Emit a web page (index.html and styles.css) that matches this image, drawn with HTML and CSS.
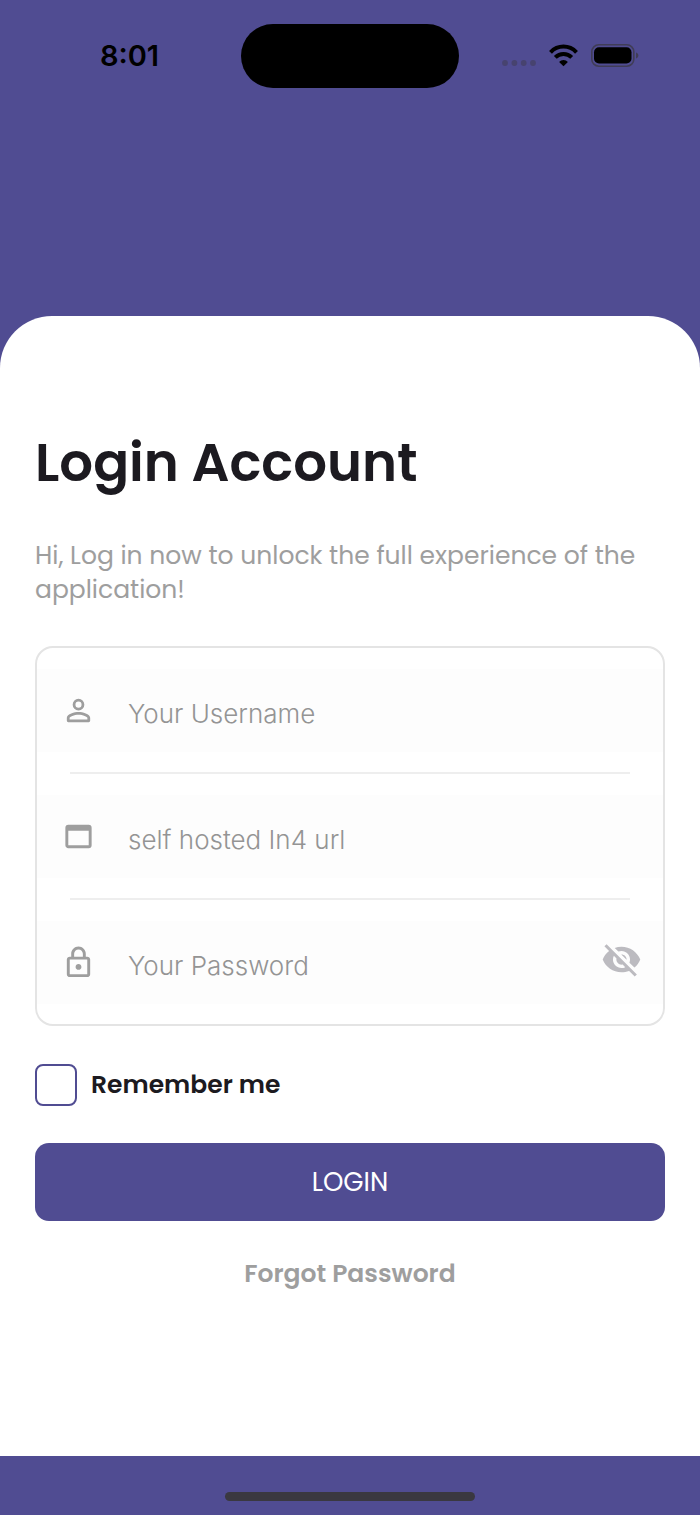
FILE: index.html
```html
<!DOCTYPE html>
<html lang="en">
<head>
<meta charset="utf-8">
<meta name="viewport" content="width=device-width, initial-scale=1">
<title>Login Account</title>
<link rel="stylesheet" href="styles.css">
</head>
<body>
<div class="screen">
  <header class="hero">
    <div class="status-bar">
      <time class="clock">8:01</time>
      <div class="island"></div>
      <div class="indicators">
        <svg class="signal" viewBox="0 0 35 24" aria-hidden="true"><circle cx="3" cy="19" r="2.900"/><circle cx="12.400" cy="19" r="2.900"/><circle cx="21.700" cy="19" r="2.900"/><circle cx="31" cy="19" r="2.900"/></svg>
        <svg class="wifi" viewBox="0 0 30 24" aria-hidden="true"><path class="wave" d="M1.500 8.300C8.800 .7 20.200 .7 27.500 8.300M6.300 13.400c4.600-4.700 11.800-4.700 16.400 0"/><path d="M14.500 22.200l-4.400-4.300c2.300-2.700 6.500-2.700 8.800 0z"/></svg>
        <svg class="battery" viewBox="0 0 48 24" aria-hidden="true"><rect class="shell" x=".8" y=".8" width="42" height="21.400" rx="7"/><rect x="3" y="3.200" width="37.500" height="16.300" rx="5"/><path class="nub" d="M45 8.500c3.200 1.300 3.200 4.700 0 6z"/></svg>
      </div>
    </div>
  </header>

  <main class="sheet">
    <h1 class="title">Login Account</h1>
    <p class="intro">Hi, Log in now to unlock the full experience of the application!</p>
    <form class="login-form">
      <div class="fields">
        <div class="field">
          <label class="field-row">
            <svg class="icon" viewBox="0 0 24 24" role="img" aria-label="Username"><path d="M12 5.900a2.100 2.100 0 1 1 0 4.200 2.100 2.100 0 0 1 0-4.200m0 9c2.970 0 6.100 1.460 6.100 2.100v1.100H5.900V17c0-.64 3.130-2.100 6.100-2.100M12 4a4 4 0 1 0 0 8 4 4 0 0 0 0-8zm0 9c-2.670 0-8 1.340-8 4v2c0 .55.45 1 1 1h14c.55 0 1-.45 1-1v-2c0-2.660-5.330-4-8-4z"/></svg>
            <input class="field-input" type="text" placeholder="Your Username" autocomplete="username">
          </label>
        </div>
        <div class="field">
          <label class="field-row">
            <svg class="icon" viewBox="0 0 24 24" role="img" aria-label="Server address"><path d="M19 4H5a2 2 0 0 0-2 2v12c0 1.100.9 2 2 2h14a2 2 0 0 0 2-2V6a2 2 0 0 0-2-2zm0 14H5V8h14v10z"/></svg>
            <input class="field-input" type="text" placeholder="self hosted In4 url">
          </label>
        </div>
        <div class="field">
          <div class="field-row">
            <svg class="icon" viewBox="0 0 24 24" aria-hidden="true"><path d="M18 8h-1V6c0-2.760-2.240-5-5-5S7 3.240 7 6v2H6c-1.100 0-2 .9-2 2v10c0 1.100.9 2 2 2h12c1.100 0 2-.9 2-2V10c0-1.100-.9-2-2-2zM9 6c0-1.660 1.340-3 3-3s3 1.340 3 3v2H9V6zm9 14H6V10h12v10zm-6-3c1.100 0 2-.9 2-2s-.9-2-2-2-2 .9-2 2 .9 2 2 2z"/></svg>
            <input class="field-input" type="password" placeholder="Your Password" aria-label="Password" autocomplete="current-password">
            <button class="reveal" type="button" aria-label="Show password">
              <svg class="reveal-icon" viewBox="0 0 24 24" aria-hidden="true"><path d="M12 7c2.760 0 5 2.240 5 5 0 .65-.13 1.260-.36 1.830l2.920 2.920c1.510-1.260 2.700-2.890 3.430-4.750-1.730-4.390-6-7.500-11-7.500-1.400 0-2.740.25-3.980.7l2.160 2.160C10.740 7.130 11.350 7 12 7zM2 4.270l2.280 2.280.46.46C3.080 8.300 1.780 10.020 1 12c1.730 4.390 6 7.500 11 7.500 1.550 0 3.030-.3 4.380-.84l.42.42L19.730 22 21 20.730 3.270 3 2 4.270zM7.530 9.800l1.550 1.550c-.05.21-.08.43-.08.65 0 1.660 1.340 3 3 3 .22 0 .44-.03.65-.08l1.550 1.550c-.67.33-1.410.53-2.200.53-2.760 0-5-2.240-5-5 0-.79.2-1.530.53-2.200zm4.310-.78l3.150 3.150.02-.16c0-1.660-1.340-3-3-3l-.17.01z"/></svg>
            </button>
          </div>
        </div>
      </div>
      <label class="remember"><input class="remember-box" type="checkbox">Remember me</label>
      <button class="submit" type="submit">LOGIN</button>
      <a class="forgot" href="#forgot">Forgot Password</a>
    </form>
  </main>

  <footer class="home-bar"><div class="home-indicator"></div></footer>
</div>
</body>
</html>
```

FILE: styles.css
```css
:root {
  --brand: #504c92;
  --ink: #1c1a20;
  --muted: #9e9e9e;
  --line: #e4e4e4;
}

* {
  box-sizing: border-box;
}

body {
  margin: 0;
  background: var(--brand);
  color: var(--ink);
  font-family: Poppins, Inter, "Liberation Sans", sans-serif;
  font-size: 25px;
  line-height: 34px;
}

.screen {
  display: flex;
  flex-direction: column;
  min-height: 100vh;
}

.hero {
  padding: 24px 18px 228px;
}

.status-bar {
  display: grid;
  grid-template-columns: 1fr 218px 1fr;
  align-items: center;
  justify-items: center;
}

.clock {
  color: #000;
  font-family: Inter, "Liberation Sans", sans-serif;
  font-size: 29px;
  font-weight: 600;
}

.island {
  width: 100%;
  height: 64px;
  border-radius: 32px;
  background: #000;
}

.indicators {
  display: flex;
  align-items: center;
  gap: 12px;
}

.indicators svg {
  height: 24px;
}

.signal {
  width: 35px;
  fill: #47436f;
}

.wifi {
  width: 30px;
}

.wave {
  fill: none;
  stroke: #000;
  stroke-width: 4;
}

.battery {
  width: 48px;
}

.shell {
  fill: none;
  stroke: #403d56;
  stroke-width: 1.6;
}

.nub {
  fill: #403d56;
}

.sheet {
  flex: 1;
  padding: 115px 35px 40px;
  border-radius: 52px 52px 0 0;
  background: #fff;
}

.title {
  margin: 0 0 44px;
  font-size: 53px;
  font-weight: 600;
  line-height: 64px;
}

.intro {
  margin: 0 0 39px;
  color: var(--muted);
}

.login-form {
  display: flex;
  flex-direction: column;
}

.fields {
  overflow: hidden;
  border: 2px solid var(--line);
  border-radius: 18px;
}

.field {
  padding: 21px 0 20px;
}

.field + .field {
  padding-top: 0;
}

.field + .field::before {
  content: "";
  display: block;
  height: 2px;
  margin: 0 33px 21px;
  background: #eee;
}

.field-row {
  display: flex;
  align-items: center;
  height: 83px;
  padding: 0 21px 0 24px;
  background: #fdfdfd;
}

.icon {
  flex: none;
  width: 35px;
  height: 35px;
  fill: var(--muted);
}

.field-input {
  flex: 1;
  min-width: 0;
  height: 100%;
  margin-left: 32px;
  padding: 6px 0 0;
  border: 0;
  outline: 0;
  background: transparent;
  color: var(--ink);
  font-family: Inter, "Liberation Sans", sans-serif;
  font-size: 26px;
  font-weight: 300;
}

.field-input::placeholder {
  color: #949494;
  opacity: 1;
}

.reveal {
  display: flex;
  padding: 0 0 6px;
  border: 0;
  background: none;
}

.reveal-icon {
  width: 41px;
  height: 41px;
  fill: #bcbbc0;
}

.remember {
  display: flex;
  align-items: center;
  align-self: flex-start;
  gap: 14px;
  margin: 38px 0 37px;
  font-weight: 600;
}

.remember-box {
  appearance: none;
  width: 42px;
  height: 42px;
  margin: 0;
  border: 2px solid var(--brand);
  border-radius: 8px;
  background: #fff;
}

.remember-box:checked {
  background: var(--brand);
}

.submit {
  height: 78px;
  border: 0;
  border-radius: 14px;
  background: var(--brand);
  color: #fff;
  font: inherit;
  font-size: 26px;
}

.forgot {
  align-self: center;
  margin-top: 36px;
  color: var(--muted);
  font-weight: 600;
  text-decoration: none;
}

.home-bar {
  display: flex;
  justify-content: center;
  padding: 36px 0 14px;
}

.home-indicator {
  width: 250px;
  height: 9px;
  border-radius: 5px;
  background: #3a3840;
}
```
